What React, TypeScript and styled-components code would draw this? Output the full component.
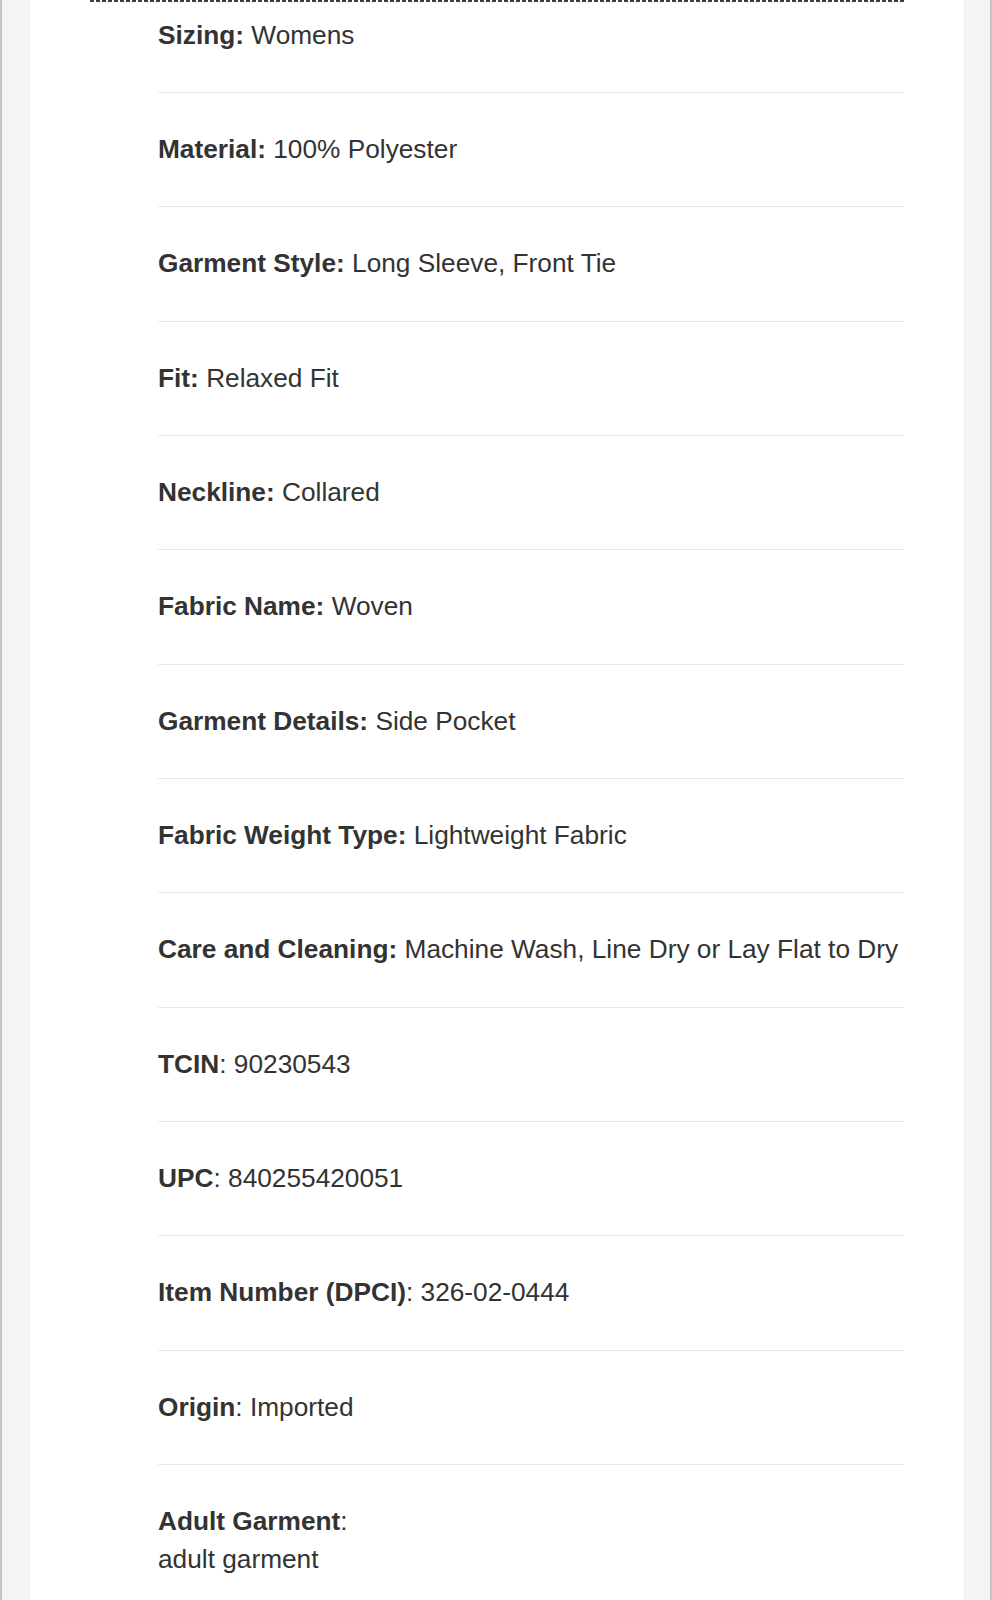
import React from 'react';
import styled, { createGlobalStyle } from 'styled-components';

const GlobalStyle = createGlobalStyle`
  html, body {
    margin: 0;
    padding: 0;
    background: #f4f4f4;
  }
  body {
    font-family: 'Liberation Sans', Arial, Helvetica, sans-serif;
    color: #333;
  }
`;

const Page = styled.div`
  display: flex;
  min-height: 1600px;
  border-left: 2px solid #c4c4c4;
  border-right: 2px solid #c4c4c4;
  background: #f4f4f4;
  padding: 0 26px 0 28px;
  overflow: hidden;
`;

const Panel = styled.div`
  flex: 1;
  background: #fff;
  box-shadow: 0 0 2px rgba(0, 0, 0, 0.06);
  padding: 0 60px 0 60px;
`;

const Dashed = styled.div`
  height: 2px;
  background: repeating-linear-gradient(to right, #3c3c3c 0 4px, transparent 4px 6px);
`;

const List = styled.ul`
  list-style: none;
  margin: 0;
  padding: 0 0 0 68px;
`;

const Row = styled.li<{ $first?: boolean; $last?: boolean }>`
  padding: ${(p) => (p.$first ? '13.5px' : '37px')} 0 38.35px;
  border-bottom: ${(p) => (p.$last ? 'none' : '1px solid #e8e8e8')};
  font-size: 26.25px;
  line-height: 38px;
  color: #333;
  white-space: nowrap;
`;

const Label = styled.b`
  font-weight: 700;
  color: #333;
`;

const Value = styled.span<{ $block?: boolean }>`
  display: ${(p) => (p.$block ? 'block' : 'inline')};
`;

type Spec = { label: string; value: string; colonBold: boolean; block?: boolean };

const specs: Spec[] = [
  { label: 'Sizing', value: 'Womens', colonBold: true },
  { label: 'Material', value: '100% Polyester', colonBold: true },
  { label: 'Garment Style', value: 'Long Sleeve, Front Tie', colonBold: true },
  { label: 'Fit', value: 'Relaxed Fit', colonBold: true },
  { label: 'Neckline', value: 'Collared', colonBold: true },
  { label: 'Fabric Name', value: 'Woven', colonBold: true },
  { label: 'Garment Details', value: 'Side Pocket', colonBold: true },
  { label: 'Fabric Weight Type', value: 'Lightweight Fabric', colonBold: true },
  { label: 'Care and Cleaning', value: 'Machine Wash, Line Dry or Lay Flat to Dry', colonBold: true },
  { label: 'TCIN', value: '90230543', colonBold: false },
  { label: 'UPC', value: '840255420051', colonBold: false },
  { label: 'Item Number (DPCI)', value: '326-02-0444', colonBold: false },
  { label: 'Origin', value: 'Imported', colonBold: false },
  { label: 'Adult Garment', value: 'adult garment', colonBold: false, block: true },
];

export default function App() {
  return (
    <>
      <GlobalStyle />
      <Page>
        <Panel>
          <Dashed />
          <List>
            {specs.map((s, i) => (
              <Row key={s.label} $first={i === 0} $last={i === specs.length - 1}>
                {s.colonBold ? <Label>{s.label}:</Label> : <><Label>{s.label}</Label>:</>}
                {s.block ? <Value $block>{s.value}</Value> : <> <Value>{s.value}</Value></>}
              </Row>
            ))}
          </List>
        </Panel>
      </Page>
    </>
  );
}
